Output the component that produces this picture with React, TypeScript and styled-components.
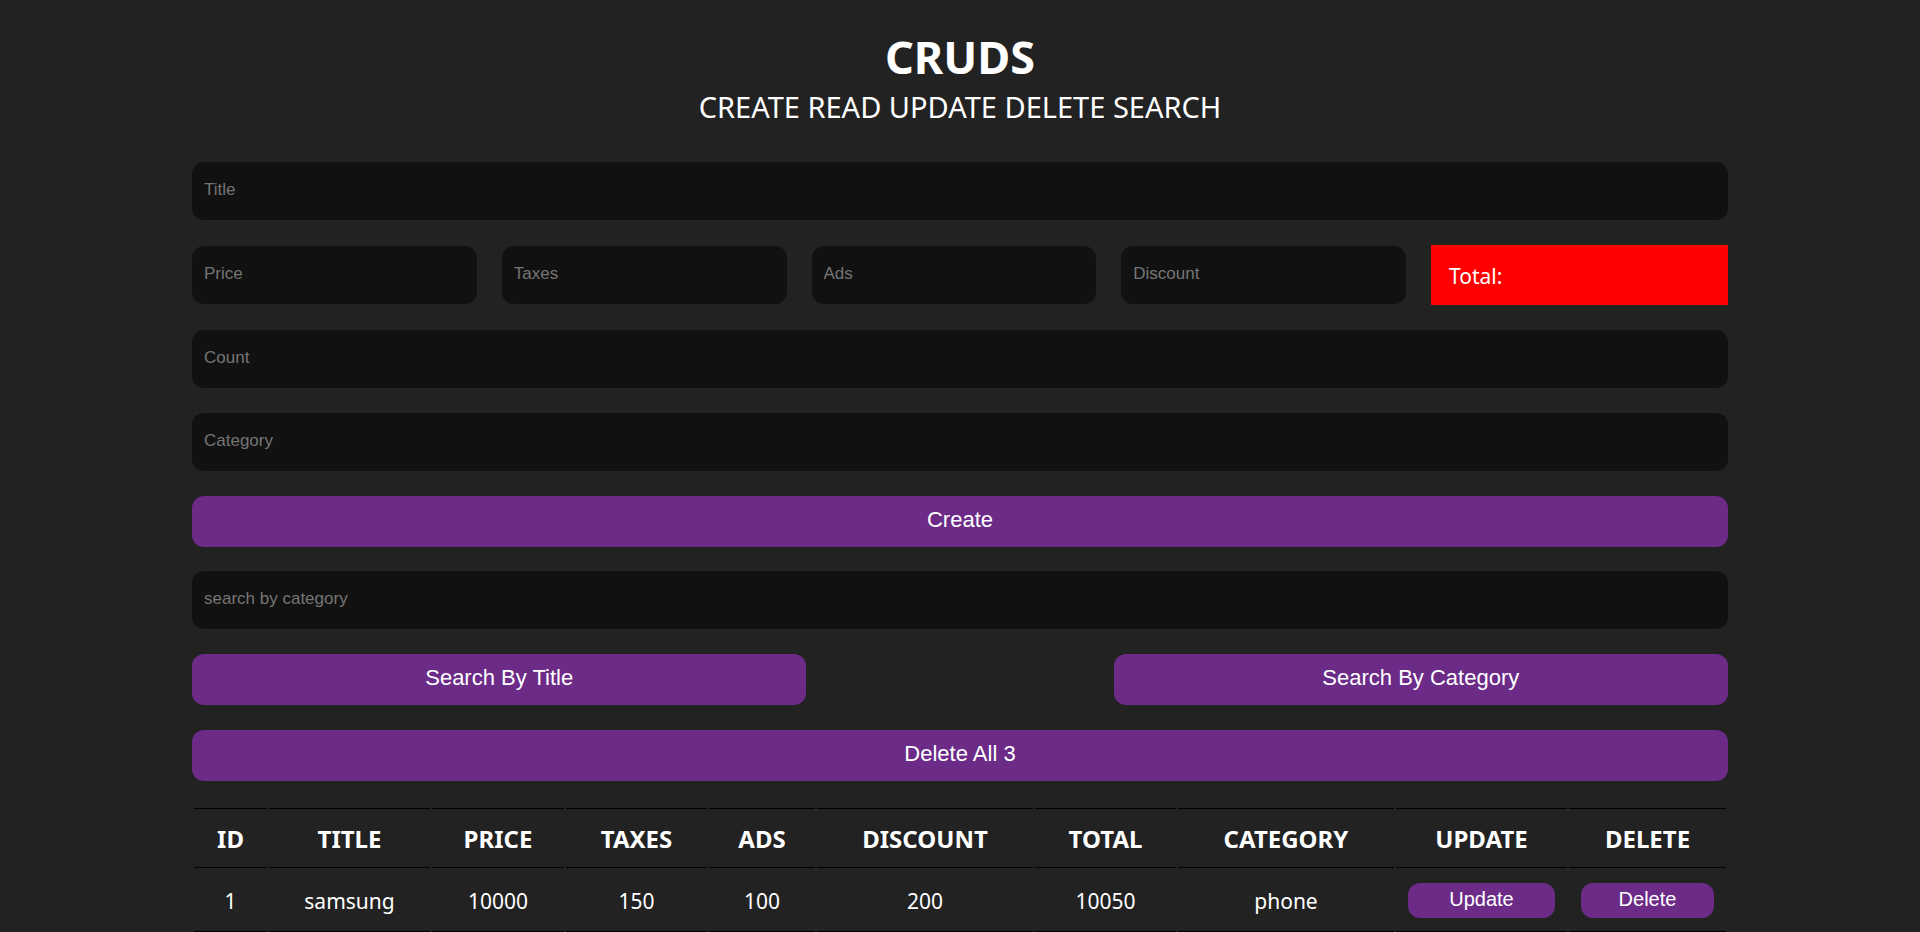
import React, { useState } from "react";
import styled, { createGlobalStyle } from "styled-components";

const uiFont = '"Segoe UI", "Noto Sans", sans-serif';
const controlFont = 'Arial, "Liberation Sans", sans-serif';

const GlobalStyle = createGlobalStyle`
  * {
    box-sizing: border-box;
  }

  body {
    margin: 0;
    background: #222;
    color: #fff;
    font-family: ${uiFont};
  }
`;

const Page = styled.main`
  width: 80%;
  margin: 0 auto;
`;

const Header = styled.header`
  padding: 27px 0 35px;
  text-align: center;
  text-transform: uppercase;
`;

const Heading = styled.h1`
  margin: 0;
  font-size: 45px;
  line-height: 60px;
  font-weight: 700;
`;

const Subheading = styled.p`
  margin: 0;
  font-size: 29px;
  line-height: 40px;
`;

const Stack = styled.section`
  display: flex;
  flex-direction: column;
  gap: 25px;
  margin-bottom: 24px;
`;

const PriceRow = styled.div`
  display: flex;
  align-items: center;
  gap: 25px;
`;

const Field = styled.input`
  display: block;
  width: 100%;
  min-width: 0;
  height: 58px;
  padding: 0 12px 2px;
  border: none;
  border-radius: 12px;
  outline: none;
  background: #111;
  color: #fff;
  font-family: ${controlFont};
  font-size: 17px;

  &::placeholder {
    color: #757575;
  }

  &:focus {
    background: #000;
  }
`;

const Total = styled.output`
  flex: 0 0 297px;
  height: 60px;
  padding: 2px 18px 0;
  background: #f00;
  font-size: 21px;
  line-height: 58px;
`;

const Button = styled.button<{ $compact?: boolean }>`
  display: block;
  width: 100%;
  height: ${({ $compact }) => ($compact ? "35px" : "51px")};
  padding: ${({ $compact }) => ($compact ? "0 0 2px" : "0 0 4px")};
  border: none;
  border-radius: 12px;
  background: #6b2b87;
  color: #fff;
  font-family: ${controlFont};
  font-size: ${({ $compact }) => ($compact ? "20px" : "22px")};
  cursor: pointer;
`;

const SearchButtons = styled.div`
  display: flex;
  justify-content: space-between;

  ${Button} {
    width: 40%;
  }
`;

const Table = styled.table`
  width: 100%;
  margin-top: 25px;
  table-layout: fixed;
  border-spacing: 2px;
  text-align: center;
`;

const HeadCell = styled.th`
  height: 57px;
  padding: 4px 0 0;
  border-top: 1px solid #000;
  font-size: 24px;
  line-height: 32px;
  text-transform: uppercase;
`;

const Cell = styled.td`
  height: 65px;
  padding: 2px 12px 0;
  border: solid #000;
  border-width: 1px 0;
  font-size: 21px;
  line-height: 32px;
`;

const columns = [
  { name: "id", width: 73 },
  { name: "title", width: 161 },
  { name: "price", width: 132 },
  { name: "taxes", width: 141 },
  { name: "ads", width: 106 },
  { name: "discount", width: 216 },
  { name: "total", width: 141 },
  { name: "category", width: 216 },
  { name: "update", width: 171 },
  { name: "delete", width: 157 },
];

const products = [
  { title: "samsung", price: 10000, taxes: 150, ads: 100, discount: 200, category: "phone" },
];

const costFields = ["Price", "Taxes", "Ads", "Discount"] as const;

export default function App() {
  const [costs, setCosts] = useState<Record<string, string>>({});
  const value = (name: string) => Number(costs[name] || 0);
  const total = costs.Price
    ? value("Price") + value("Taxes") + value("Ads") - value("Discount")
    : "";

  return (
    <>
      <GlobalStyle />
      <Page>
        <Header>
          <Heading>cruds</Heading>
          <Subheading>create read update delete search</Subheading>
        </Header>

        <Stack>
          <Field type="text" placeholder="Title" aria-label="Title" />
          <PriceRow>
            {costFields.map((name) => (
              <Field
                key={name}
                type="number"
                placeholder={name}
                aria-label={name}
                value={costs[name] ?? ""}
                onChange={(e) => setCosts({ ...costs, [name]: e.target.value })}
              />
            ))}
            <Total>Total: {total}</Total>
          </PriceRow>
          <Field type="number" placeholder="Count" aria-label="Count" />
          <Field type="text" placeholder="Category" aria-label="Category" />
          <Button type="button">Create</Button>
        </Stack>

        <Stack>
          <Field type="search" placeholder="search by category" aria-label="Search" />
          <SearchButtons>
            <Button type="button">Search By Title</Button>
            <Button type="button">Search By Category</Button>
          </SearchButtons>
          <Button type="button">Delete All 3</Button>
        </Stack>

        <Table>
          <colgroup>
            {columns.map(({ name, width }) => (
              <col key={name} width={width} />
            ))}
          </colgroup>
          <thead>
            <tr>
              {columns.map(({ name }) => (
                <HeadCell key={name} scope="col">
                  {name}
                </HeadCell>
              ))}
            </tr>
          </thead>
          <tbody>
            {products.map((p, i) => (
              <tr key={p.title}>
                <Cell>{i + 1}</Cell>
                <Cell>{p.title}</Cell>
                <Cell>{p.price}</Cell>
                <Cell>{p.taxes}</Cell>
                <Cell>{p.ads}</Cell>
                <Cell>{p.discount}</Cell>
                <Cell>{p.price + p.taxes + p.ads - p.discount}</Cell>
                <Cell>{p.category}</Cell>
                <Cell>
                  <Button type="button" $compact>
                    Update
                  </Button>
                </Cell>
                <Cell>
                  <Button type="button" $compact>
                    Delete
                  </Button>
                </Cell>
              </tr>
            ))}
          </tbody>
        </Table>
      </Page>
    </>
  );
}
